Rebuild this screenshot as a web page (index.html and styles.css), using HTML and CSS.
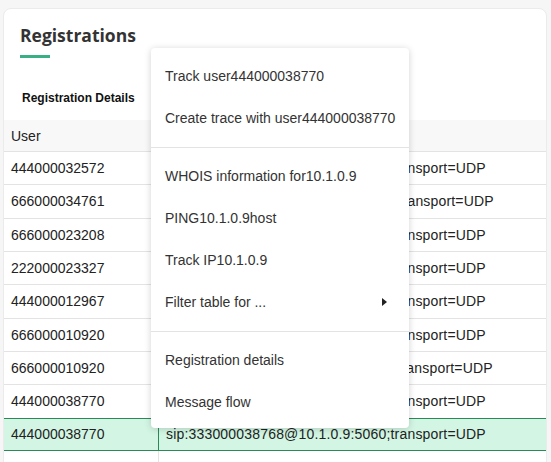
FILE: index.html
```html
<!DOCTYPE html>
<html lang="en">
<head>
<meta charset="utf-8">
<title>Registrations</title>
<link rel="stylesheet" href="styles.css">
</head>
<body>
<div class="card">
  <div class="card-head">
    <h2 class="title">Registrations</h2>
    <div class="accent"></div>
  </div>
  <div class="tabs"><span class="tab">Registration Details</span></div>
  <div class="grid">
    <div class="row head"><div class="cell c1">User</div><div class="cell c2">Contact</div></div>
    <div class="row"><div class="cell c1">444000032572</div><div class="cell c2">sip:444000032572@10.1.0.5:5060;transport=UDP</div></div>
    <div class="row"><div class="cell c1">666000034761</div><div class="cell c2">sip:666000034761@10.1.0.12:5060;transport=UDP</div></div>
    <div class="row"><div class="cell c1">666000023208</div><div class="cell c2">sip:666000023208@10.1.0.7:5060;transport=UDP</div></div>
    <div class="row"><div class="cell c1">222000023327</div><div class="cell c2">sip:222000023327@10.1.0.4:5060;transport=UDP</div></div>
    <div class="row"><div class="cell c1">444000012967</div><div class="cell c2">sip:444000012967@10.1.0.3:5060;transport=UDP</div></div>
    <div class="row"><div class="cell c1">666000010920</div><div class="cell c2">sip:666000010920@10.1.0.6:5060;transport=UDP</div></div>
    <div class="row"><div class="cell c1">666000010920</div><div class="cell c2">sip:666000010920@10.1.0.11:5060;transport=UDP</div></div>
    <div class="row"><div class="cell c1">444000038770</div><div class="cell c2">sip:444000038770@10.1.0.8:5060;transport=UDP</div></div>
    <div class="row selected"><div class="cell c1">444000038770</div><div class="cell c2">sip:333000038768@10.1.0.9:5060;transport=UDP</div></div>
    <div class="row"><div class="cell c1"></div><div class="cell c2"></div></div>
  </div>
</div>

<div class="menu">
  <div class="item">Track user444000038770</div>
  <div class="item">Create trace with user444000038770</div>
  <div class="divider"></div>
  <div class="item">WHOIS information for10.1.0.9</div>
  <div class="item">PING10.1.0.9host</div>
  <div class="item">Track IP10.1.0.9</div>
  <div class="item">Filter table for ...<span class="arrow"></span></div>
  <div class="divider"></div>
  <div class="item">Registration details</div>
  <div class="item">Message flow</div>
</div>
</body>
</html>
```

FILE: styles.css
```css
html, body {
  margin: 0;
  padding: 0;
}
body {
  background: #f6f6f6;
  font-family: "Liberation Sans", Arial, sans-serif;
  font-size: 14px;
  color: #222;
  height: 462px;
  overflow: hidden;
  position: relative;
}
.card {
  margin: 8px 4px 0 3px;
  background: #fff;
  border: 1px solid #ebebeb;
  border-radius: 8px;
  overflow: hidden;
}
.card-head {
  padding: 14px 16px 0;
}
.title {
  margin: 0;
  font-family: "Open Sans", sans-serif;
  font-weight: 700;
  font-size: 17.5px;
  line-height: 24px;
  color: #333;
}
.accent {
  margin-top: 8px;
  width: 30px;
  height: 3px;
  background: #3aaf85;
}
.tabs {
  padding: 32px 18px 14px;
}
.tab {
  display: block;
  font-weight: 700;
  font-size: 12px;
  line-height: 16px;
  color: #111;
}
.grid {
  display: flex;
  flex-direction: column;
}
.row {
  display: grid;
  grid-template-columns: 155px 1fr;
  height: 33.33px;
  box-sizing: border-box;
  border-bottom: 1px solid #e3e3e3;
  background: #fff;
}
.row.head {
  height: 32px;
  background: #f8f8f8;
}
.cell {
  display: flex;
  align-items: center;
  padding: 0 7px;
  white-space: nowrap;
  overflow: hidden;
}
.c1 {
  border-right: 1px solid #e3e3e3;
}
.c2 {
  letter-spacing: 0.18px;
}
.row.head .c1 {
  border-right: none;
  padding-right: 8px;
}
.row.head .c2 {
  padding-left: 8px;
}
.row.selected {
  margin-top: -1px;
  border-top: 1px solid #2a8a57;
  border-bottom: 1px solid #2a8a57;
  background: #d3f6e4;
}
.row.selected .c1 {
  border-right-color: #2a8a57;
}
.menu {
  position: absolute;
  left: 151px;
  top: 48px;
  width: 258px;
  box-sizing: border-box;
  padding: 7px 0 5px;
  background: #fff;
  border-radius: 4px;
  box-shadow: 0 1px 7px rgba(0, 0, 0, 0.18);
  color: #333;
}
.item {
  height: 42px;
  display: flex;
  align-items: center;
  justify-content: space-between;
  padding: 0 22px 0 14px;
  white-space: nowrap;
}
.divider {
  height: 1px;
  background: #e3e3e3;
  margin: 8px 0 7px;
}
.arrow {
  width: 0;
  height: 0;
  border-left: 5px solid #222;
  border-top: 4.5px solid transparent;
  border-bottom: 4.5px solid transparent;
}
```
